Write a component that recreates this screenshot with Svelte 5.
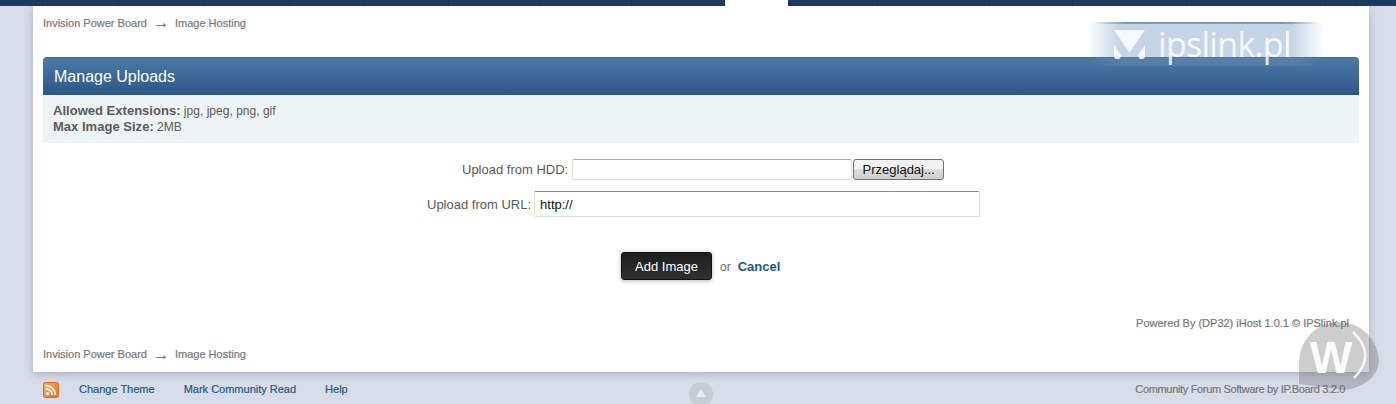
<script>
  const crumbs = ["Invision Power Board", "Image Hosting"];
  const tabs = [43, 76, 86, 85, 75, 84, 91, 92, 93, 63, 90, 112, 83, 114, 139, 31, 39];
  const footerLinks = ["Change Theme", "Mark Community Read", "Help"];
</script>

<div class="page">
  <div class="topbar">
    {#each tabs as w, i}
      <span class="tab" class:active={i === 9} style="width: {w}px"></span>
    {/each}
  </div>

  <main class="content">
    <div class="crumbs top">
      <span>{crumbs[0]}</span><span class="arrow">→</span><span>{crumbs[1]}</span>
    </div>

    <h2 class="title">Manage Uploads</h2>
    <div class="info">
      <div><strong>Allowed Extensions:</strong> jpg, jpeg, png, gif</div>
      <div><strong>Max Image Size:</strong> 2MB</div>
    </div>

    <form class="upload" on:submit|preventDefault>
      <div class="row hdd">
        <label for="hdd">Upload from HDD:</label>
        <input id="hdd" class="path" type="text" readonly />
        <button type="button" class="browse">Przeglądaj...</button>
      </div>
      <div class="row url">
        <label for="url">Upload from URL:</label>
        <input id="url" class="address" type="text" value="http://" />
      </div>
      <div class="actions">
        <button type="submit" class="add">Add Image</button>
        <span class="or">or</span>
        <a href="#cancel" class="cancel">Cancel</a>
      </div>
    </form>

    <p class="powered">Powered By (DP32) iHost 1.0.1 © IPSlink.pl</p>

    <div class="crumbs bottom">
      <span>{crumbs[0]}</span><span class="arrow">→</span><span>{crumbs[1]}</span>
    </div>
  </main>

  <footer class="foot">
    <svg class="rss" width="16" height="16" viewBox="0 0 16 16" aria-hidden="true">
      <defs>
        <linearGradient id="rssbg" x1="0" y1="0" x2="1" y2="1">
          <stop offset="0" stop-color="#fdb36f" />
          <stop offset="1" stop-color="#ee6a12" />
        </linearGradient>
      </defs>
      <rect x="0.5" y="0.5" width="15" height="15" rx="2" fill="url(#rssbg)" stroke="#d9691c" />
      <circle cx="4.6" cy="11.6" r="1.6" fill="#fff" />
      <path d="M3 6.8a6.2 6.2 0 0 1 6.2 6.2M3 3.6a9.4 9.4 0 0 1 9.4 9.4" fill="none" stroke="#fff" stroke-width="1.8" />
    </svg>
    <nav class="links">
      {#each footerLinks as link}
        <a href="#{link}">{link}</a>
      {/each}
    </nav>
    <span class="copy">Community Forum Software by IP.Board 3.2.0</span>
  </footer>

  <!-- things stamped over the page -->
  <div class="stamp" aria-hidden="true">
    <svg width="31" height="29" viewBox="0 0 46 32" preserveAspectRatio="none">
      <path d="M0 0H46L23 25ZM0 17 11 28 8 32H3Q0 32 0 29ZM46 17 35 28 38 32H43Q46 32 46 29Z" fill="#fff" opacity="0.85" />
    </svg>
    <span>ipslink.pl</span>
  </div>

  <div class="totop" aria-hidden="true"><span></span></div>

  <svg class="wmark" width="80" height="80" viewBox="0 0 80 80" aria-hidden="true">
    <path d="M0 42A40 40 0 0 1 80 42A40 30 0 0 1 45 70L0 64Z" fill="#64646e" fill-opacity="0.32" />
    <path d="M54 12Q78 35 55 58" fill="none" stroke="#fff" stroke-width="2.5" stroke-opacity="0.8" />
    <text x="32" y="53" text-anchor="middle" class="wletter">W</text>
  </svg>
</div>

<style>
  :global(body) {
    margin: 0;
    background: #d8dce8;
  }

  .page {
    position: relative;
    width: 1396px;
    height: 404px;
    overflow: hidden;
    background: #d8dce8;
    font-family: "Liberation Sans", Arial, sans-serif;
    font-size: 12px;
    color: #5a5a5a;
  }

  .topbar {
    display: flex;
    height: 6px;
  }

  .tab {
    height: 6px;
    background: #1d3a60;
    border-right: 1px solid #1a3354;
    box-sizing: border-box;
  }

  .tab.active {
    background: #fff;
    border-right: 0;
  }

  .content {
    box-sizing: border-box;
    width: 1336px;
    height: 366px;
    margin-left: 33px;
    padding: 0 10px;
    background: #fff;
    box-shadow: 0 2px 8px rgba(60, 65, 90, 0.3);
  }

  .crumbs {
    display: flex;
    align-items: center;
    color: #777;
    font-size: 11px;
    -webkit-text-stroke: 0.2px #777;
    line-height: 14px;
  }

  .crumbs.top {
    padding-top: 10px;
    height: 41px;
    box-sizing: border-box;
    align-items: flex-start;
  }

  .arrow {
    width: 28px;
    text-align: center;
    font-size: 17px;
    line-height: 13px;
    -webkit-text-stroke: 0;
    color: #666;
  }

  .title {
    box-sizing: border-box;
    height: 38px;
    margin: 10px 0 0;
    padding: 9px 11px 0;
    border-top: 1px solid #3f6b99;
    border-radius: 4px 4px 0 0;
    background: linear-gradient(#4b79a5, #2c5687);
    color: #fff;
    font-size: 16px;
    font-weight: normal;
    line-height: 19px;
  }

  .info {
    box-sizing: border-box;
    height: 48px;
    padding: 8px 10px;
    background: #eef3f6;
    font-size: 12px;
    line-height: 16px;
    color: #5a5a5a;
    letter-spacing: 0.02px;
  }

  .info strong {
    font-size: 13px;
  }

  .upload {
    display: flex;
    flex-direction: column;
  }

  .row {
    display: flex;
    align-items: center;
    font-size: 13px;
    color: #5a5a5a;
  }

  .row label {
    white-space: nowrap;
  }

  .row.hdd {
    margin-top: 16px;
    height: 21px;
    padding-left: 419px;
  }

  .row.url {
    margin-top: 11px;
    height: 26px;
    padding-left: 384px;
  }

  input {
    box-sizing: border-box;
    margin: 0;
    background: #fff;
    font-family: "Liberation Sans", Arial, sans-serif;
  }

  .path {
    width: 280px;
    height: 21px;
    margin-left: 4px;
    padding: 0;
    border: 1px solid #dcdcdc;
    border-top-color: #a8a8a8;
    border-radius: 2px;
  }

  .browse {
    box-sizing: border-box;
    width: 91px;
    height: 21px;
    margin-left: 1px;
    padding: 0;
    border: 1px solid #707070;
    border-radius: 3px;
    background: linear-gradient(#f2f2f2 0 45%, #dcdcdc 50%, #cfcfcf);
    color: #111;
    font-family: "Liberation Sans", Arial, sans-serif;
    font-size: 13px;
  }

  .address {
    width: 446px;
    height: 26px;
    margin-left: 3px;
    padding: 0 5px;
    border: 1px solid #dcdcdc;
    border-top-color: #8a8a8a;
    border-radius: 2px;
    color: #111;
    font-size: 13px;
  }

  .actions {
    display: flex;
    align-items: center;
    height: 28px;
    margin-top: 35px;
    padding-left: 578px;
  }

  .add {
    box-sizing: border-box;
    width: 91px;
    height: 28px;
    padding: 0;
    border: 1px solid #111;
    border-radius: 3px;
    background: linear-gradient(#1f1f1f, #303030);
    box-shadow: 0 1px 4px rgba(0, 0, 0, 0.3);
    color: #fff;
    font-family: "Liberation Sans", Arial, sans-serif;
    font-size: 13px;
  }

  .or {
    margin-left: 8px;
    margin-top: 1px;
    color: #666;
    font-size: 12px;
  }

  .cancel {
    margin-left: 7px;
    margin-top: 1px;
    color: #225985;
    font-size: 13px;
    font-weight: bold;
    text-decoration: none;
  }

  .powered {
    margin: 36px 10px 0 0;
    text-align: right;
    color: #777;
    font-size: 11px;
    -webkit-text-stroke: 0.2px #777;
    line-height: 14px;
  }

  .crumbs.bottom {
    margin-top: 17px;
  }

  .foot {
    display: flex;
    align-items: center;
    height: 32px;
    padding: 0 27px 0 43px;
  }

  .rss {
    flex: none;
    margin-top: 4px;
  }

  .links {
    display: flex;
    gap: 29px;
    margin-left: 20px;
    margin-top: 2px;
  }

  .links a {
    color: #225985;
    font-size: 11px;
    -webkit-text-stroke: 0.2px #225985;
    text-decoration: none;
  }

  .copy {
    margin-left: auto;
    margin-right: 24px;
    margin-top: 2px;
    color: #777;
    font-size: 11px;
    letter-spacing: -0.33px;
    -webkit-text-stroke: 0.2px #777;
  }

  .stamp {
    position: absolute;
    left: 1087px;
    top: 22px;
    box-sizing: border-box;
    width: 238px;
    height: 44px;
    display: flex;
    align-items: flex-start;
    gap: 13px;
    padding: 8px 0 0 27px;
  }

  /* glass band: fades out at both ends, nearly gone over the blue header */
  .stamp::before {
    content: "";
    position: absolute;
    inset: 0;
    background:
      linear-gradient(90deg, rgba(184, 204, 226, 0) 0, rgba(190, 208, 228, 0.9) 14%, rgba(190, 208, 228, 0.9) 86%, rgba(184, 204, 226, 0) 100%);
    -webkit-mask-image: linear-gradient(#000 0 80%, rgba(0, 0, 0, 0.12) 80%);
    mask-image: linear-gradient(#000 0 80%, rgba(0, 0, 0, 0.12) 80%);
  }

  .stamp::after {
    content: "";
    position: absolute;
    left: 8px;
    right: 8px;
    top: 0;
    height: 2px;
    background: linear-gradient(90deg, rgba(110, 135, 165, 0), rgba(110, 135, 165, 0.8) 15%, rgba(110, 135, 165, 0.8) 85%, rgba(110, 135, 165, 0));
  }

  .stamp svg {
    position: relative;
    flex: none;
  }

  .stamp span {
    position: relative;
    margin-top: -1px;
    color: rgba(255, 255, 255, 0.85);
    font-family: "Open Sans", sans-serif;
    font-size: 34px;
    line-height: 30px;
    letter-spacing: -0.7px;
  }

  .totop {
    position: absolute;
    left: 689px;
    top: 382px;
    width: 24px;
    height: 24px;
    border-radius: 50%;
    background: #c8ccd5;
    display: flex;
    justify-content: center;
  }

  .totop span {
    width: 0;
    height: 0;
    margin-top: 7px;
    border: 5px solid transparent;
    border-top: 0;
    border-bottom: 8px solid #e8ecf4;
  }

  .wmark {
    position: absolute;
    left: 1299px;
    top: 320px;
  }

  .wletter {
    fill: #fff;
    fill-opacity: 0.95;
    font-family: "Liberation Sans", sans-serif;
    font-size: 45px;
    font-weight: bold;
  }
</style>
